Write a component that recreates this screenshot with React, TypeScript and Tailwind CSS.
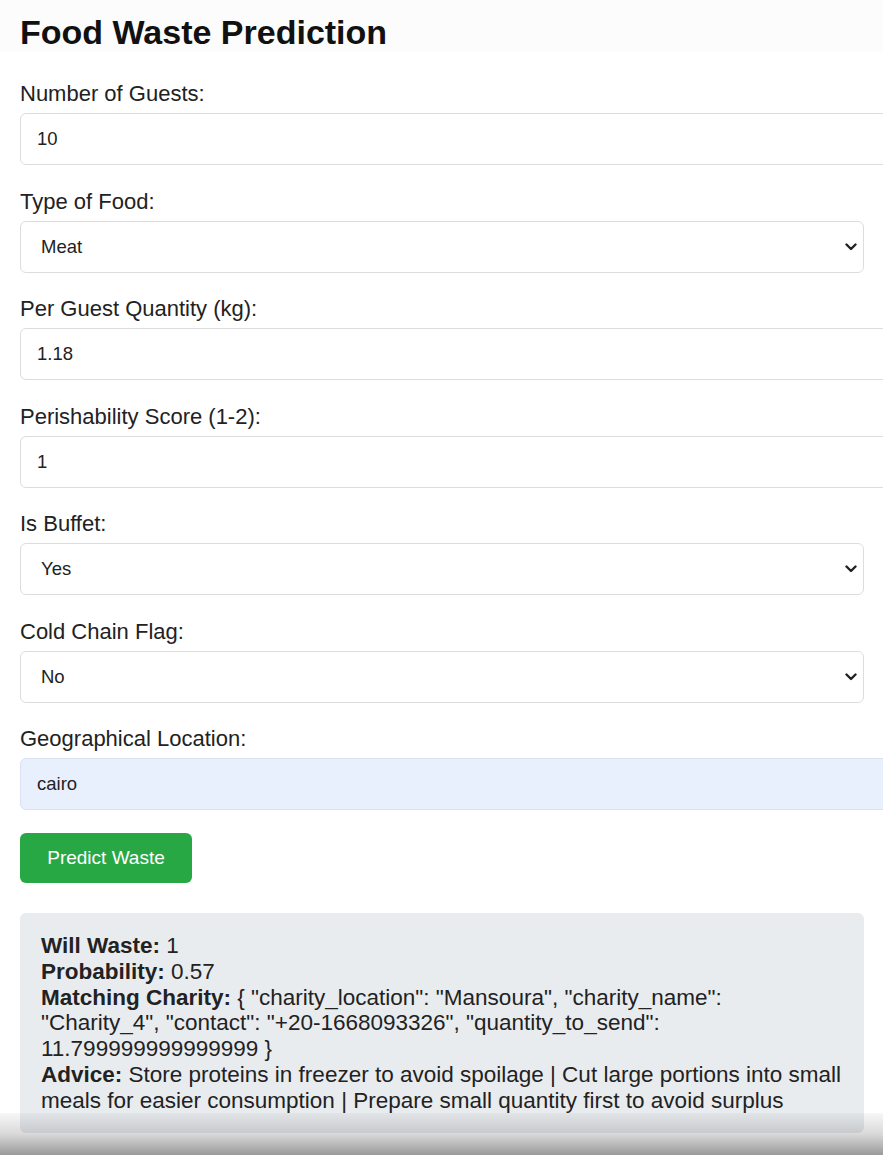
import React from "react";

const labelClass = "block text-[22px] leading-[23px] text-[#222] mb-2";
const inputClass =
  "block w-[calc(100%+40px)] h-[52px] rounded-[6px] border border-[#ddd] bg-white px-4 text-[18.5px] text-[#222] outline-none";
const selectClass =
  "block w-full h-[52px] appearance-none rounded-[6px] border border-[#ddd] bg-white pl-5 pr-8 text-[18.5px] text-[#222] outline-none";

function Chevron() {
  return (
    <svg
      className="pointer-events-none absolute right-[7px] top-1/2 -translate-y-1/2"
      width="12"
      height="8"
      viewBox="0 0 12 8"
      fill="none"
    >
      <path d="M1.5 1.5 L6 6 L10.5 1.5" stroke="#222" strokeWidth="2.4" strokeLinecap="round" strokeLinejoin="round" />
    </svg>
  );
}

function Field({ label, children }: { label: string; children: React.ReactNode }) {
  return (
    <div className="mb-[24.5px]">
      <label className={labelClass}>{label}</label>
      {children}
    </div>
  );
}

function Select({ value, options }: { value: string; options: string[] }) {
  return (
    <div className="relative">
      <select className={selectClass} defaultValue={value}>
        {options.map((o) => (
          <option key={o}>{o}</option>
        ))}
      </select>
      <Chevron />
    </div>
  );
}

export default function App() {
  return (
    <div
      className="relative h-[1155px] overflow-hidden bg-white text-[#222]"
      style={{ fontFamily: '"Liberation Sans", Arial, sans-serif' }}
    >
      <div className="bg-[#fcfcfc] pl-5 pt-[14px] pb-[1px]">
        <h1 className="text-[34px] leading-[37px] font-bold text-[#111]">Food Waste Prediction</h1>
      </div>

      <form className="pl-5 pr-[19px] pt-[30px]">
        <Field label="Number of Guests:">
          <input type="text" className={inputClass} defaultValue="10" />
        </Field>
        <Field label="Type of Food:">
          <Select value="Meat" options={["Meat", "Vegetables", "Dairy", "Bakery"]} />
        </Field>
        <Field label="Per Guest Quantity (kg):">
          <input type="text" className={inputClass} defaultValue="1.18" />
        </Field>
        <Field label="Perishability Score (1-2):">
          <input type="text" className={inputClass} defaultValue="1" />
        </Field>
        <Field label="Is Buffet:">
          <Select value="Yes" options={["Yes", "No"]} />
        </Field>
        <Field label="Cold Chain Flag:">
          <Select value="No" options={["Yes", "No"]} />
        </Field>
        <div className="mb-[23px]">
          <label className={labelClass}>Geographical Location:</label>
          <input
            type="text"
            className="block w-[calc(100%+40px)] h-[52px] rounded-[6px] border border-[#d9e2f0] bg-[#e8f0fe] px-4 text-[18.5px] text-[#222] outline-none"
            defaultValue="cairo"
          />
        </div>

        <button
          type="button"
          className="h-[50px] w-[172px] rounded-[6px] bg-[#28a745] text-[19px] text-white"
        >
          Predict Waste
        </button>

        <div className="mt-[30px] rounded-[6px] bg-[#e9ecef] px-[21px] pt-[20px] pb-[19px] text-[22.5px] leading-[25.8px] text-[#222]">
          <strong>Will Waste:</strong> 1
          <br />
          <strong>Probability:</strong> 0.57
          <br />
          <strong>Matching Charity:</strong> {'{ "charity_location": "Mansoura", "charity_name": "Charity_4", "contact": "+20-1668093326", "quantity_to_send": 11.799999999999999 }'}
          <br />
          <strong>Advice:</strong> Store proteins in freezer to avoid spoilage | Cut large portions into small meals for
          easier consumption | Prepare small quantity first to avoid surplus
        </div>
      </form>

      <div className="pointer-events-none absolute bottom-0 left-0 right-0 h-[42px] bg-gradient-to-b from-[rgba(0,0,0,0.03)] via-[rgba(0,0,0,0.15)] to-[rgba(0,0,0,0.4)]" />
    </div>
  );
}
